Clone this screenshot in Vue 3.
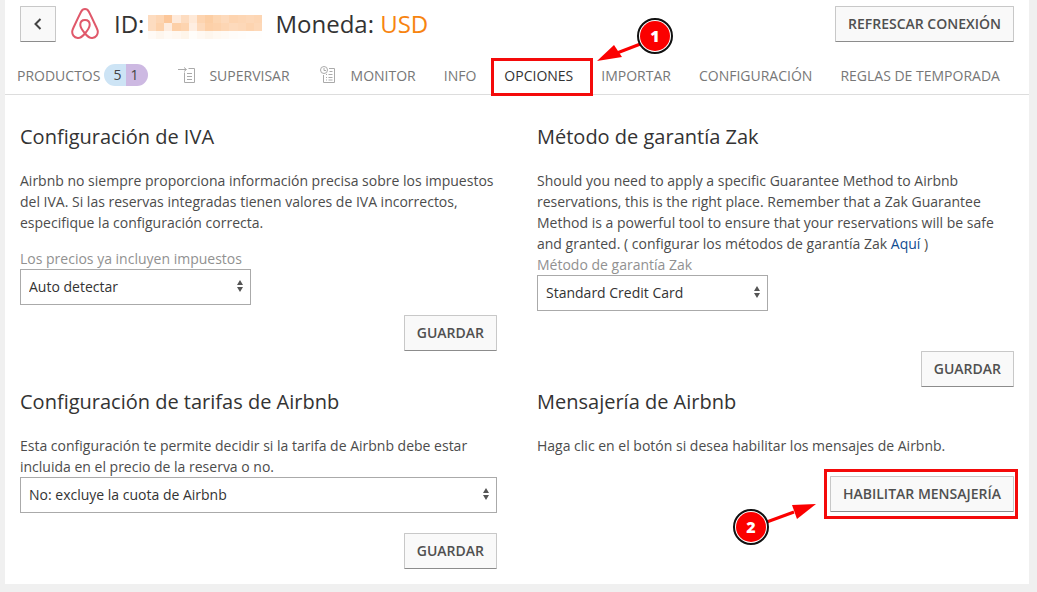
<script setup>
import { ref } from 'vue'

const vat = ref('Auto detectar')
const guarantee = ref('Standard Credit Card')
const fee = ref('No: excluye la cuota de Airbnb')

const mosaic = [
  ['#fddcc0', '#fdd6b4', '#fcc79a', '#feeadb', '#fddcc0', '#fee9d8', '#fdd4b0', '#fcceA4', '#fdd6b2', '#fddabc', '#fdd4b0', '#fdd6b4', '#fdd8b8', '#fdd6b4'],
  ['#fddcc0', '#fdd2ac', '#feecdf', '#fdd0a8', '#fdd4b0', '#feeee2', '#fddabc', '#fdd0a8', '#fdd2ac', '#fdd6b4', '#fddabc', '#fdd8b8', '#fdd4b0', '#fdd8b8'],
  ['#fffaf6', '#fef6ee', '#fffaf5', '#fff8f1', '#fef5ea', '#fffdfa', '#fff9f3', '#fef6ed', '#fff9f2', '#fffaf5', '#fffcf9', '#fffdfb', '#fffefd', '#fffefd'],
]
</script>

<template>
  <main class="card">
    <header class="top">
      <button class="btn back" type="button" aria-label="Volver">
        <svg width="10" height="14" viewBox="0 0 10 14" aria-hidden="true"><path d="M7.5 2 2.5 7l5 5" /></svg>
      </button>
      <svg class="logo" width="28" height="32" viewBox="0 0 28 32" aria-hidden="true">
        <path d="M14 25.5C10.8 21.6 9.3 18.8 9.3 16.7C9.3 13.9 11.2 12.1 14 12.1S18.7 13.9 18.7 16.7C18.7 18.8 17.2 21.6 14 25.5C11.3 28.8 8.9 30.2 6.7 30C3 29.7.7 26.5 1.3 22.8C1.5 21.7 2 20.7 3 18.5C5 14.2 8.5 6.7 10.1 3.7C11.1 1.8 12.2 1 14 1S16.9 1.8 17.9 3.7C19.5 6.7 23 14.2 25 18.5C26 20.7 26.5 21.7 26.7 22.8C27.3 26.5 25 29.7 21.3 30C19.1 30.2 16.7 28.8 14 25.5Z" />
      </svg>
      <h1>
        <span>ID:</span>
        <svg class="mosaic" width="114" height="24" viewBox="0 0 14 3" preserveAspectRatio="none" shape-rendering="crispEdges" aria-hidden="true">
          <template v-for="(row, y) in mosaic" :key="y">
            <rect v-for="(c, x) in row" :key="x" :x="x" :y="y" width="1" height="1" :fill="c" />
          </template>
        </svg>
        <span>Moneda: <span class="currency">USD</span></span>
      </h1>
      <button class="btn" type="button">REFRESCAR CONEXIÓN</button>
    </header>

    <nav>
      <a href="#">PRODUCTOS <span class="badge"><span>5</span><span>1</span></span></a>
      <a href="#">
        <svg class="nav-icon" width="18" height="18" viewBox="0 0 18 18" aria-hidden="true">
          <path d="M0 3.500h8M6 1.500l2.500 2L6 5.500M10.500 2.500h6v14h-10V6.500M9 7.500h5M9 10.500h5M9 13.500h5" />
        </svg>
        SUPERVISAR
      </a>
      <a href="#">
        <svg class="nav-icon" width="18" height="18" viewBox="0 0 18 18" aria-hidden="true">
          <circle cx="4" cy="4" r="3.500" />
          <path d="M4 2v2.500h2M9 2.500h5.500v14h-11V9M9.500 5.500h3M6 8.500h1M8.500 8.500h4M6 11.500h1M8.500 11.500h4M6 14h1M8.500 14h4" />
        </svg>
        MONITOR
      </a>
      <a href="#">INFO</a>
      <a href="#" class="active" aria-current="page">
        OPCIONES
        <span class="frame frame-tab"></span>
        <svg class="callout callout-tab" width="84" height="50" viewBox="0 0 84 50" aria-hidden="true">
          <path class="shaft" d="M50 27 24 37" />
          <path class="head" d="M4 45 21 29 29 41Z" />
          <circle class="rim" cx="62" cy="20" r="17" />
          <circle class="disc" cx="62" cy="20" r="15" />
          <text x="62" y="26">1</text>
        </svg>
      </a>
      <a href="#">IMPORTAR</a>
      <a href="#">CONFIGURACIÓN</a>
      <a href="#">REGLAS DE TEMPORADA</a>
    </nav>

    <div class="grid">
      <section>
        <h2>Configuración de IVA</h2>
        <p>Airbnb no siempre proporciona información precisa sobre los impuestos del IVA. Si las reservas integradas tienen valores de IVA incorrectos, especifique la configuración correcta.</p>
        <label class="spaced" for="vat">Los precios ya incluyen impuestos</label>
        <div class="select short">
          <select id="vat" v-model="vat"><option>Auto detectar</option></select>
          <svg width="6" height="12" viewBox="0 0 6 12" aria-hidden="true"><path d="M3 0 6 5H0ZM3 12 0 7h6Z" /></svg>
        </div>
        <div class="actions near"><button class="btn" type="button">GUARDAR</button></div>
      </section>

      <section>
        <h2>Método de garantía Zak</h2>
        <p>Should you need to apply a specific Guarantee Method to Airbnb reservations, this is the right place. Remember that a Zak Guarantee Method is a powerful tool to ensure that your reservations will be safe and granted. ( configurar los métodos de garantía Zak <a href="#">Aquí</a> )</p>
        <label for="guarantee">Método de garantía Zak</label>
        <div class="select short">
          <select id="guarantee" v-model="guarantee"><option>Standard Credit Card</option></select>
          <svg width="6" height="12" viewBox="0 0 6 12" aria-hidden="true"><path d="M3 0 6 5H0ZM3 12 0 7h6Z" /></svg>
        </div>
        <div class="actions far"><button class="btn" type="button">GUARDAR</button></div>
      </section>

      <section>
        <h2>Configuración de tarifas de Airbnb</h2>
        <p><label class="plain" for="fee">Esta configuración te permite decidir si la tarifa de Airbnb debe estar incluida en el precio de la reserva o no.</label></p>
        <div class="select">
          <select id="fee" v-model="fee"><option>No: excluye la cuota de Airbnb</option></select>
          <svg width="6" height="12" viewBox="0 0 6 12" aria-hidden="true"><path d="M3 0 6 5H0ZM3 12 0 7h6Z" /></svg>
        </div>
        <div class="actions"><button class="btn" type="button">GUARDAR</button></div>
      </section>

      <section>
        <h2>Mensajería de Airbnb</h2>
        <p>Haga clic en el botón si desea habilitar los mensajes de Airbnb.</p>
        <div class="actions">
          <div class="marked">
            <button class="btn" type="button">HABILITAR MENSAJERÍA</button>
            <span class="frame frame-button"></span>
            <svg class="callout callout-button" width="88" height="46" viewBox="0 0 88 46" aria-hidden="true">
              <path class="shaft" d="M32 22 62 11" />
              <path class="head" d="M84 3 60 4 65 18Z" />
              <circle class="rim" cx="19" cy="26" r="17" />
              <circle class="disc" cx="19" cy="26" r="15" />
              <text x="19" y="32">2</text>
            </svg>
          </div>
        </div>
      </section>
    </div>
  </main>
</template>

<style>
html {
  min-height: 100%;
  background: #f0f0f0;
}
</style>

<style scoped>
* {
  box-sizing: border-box;
}
.card {
  margin: 0 8px 8px 5px;
  background: #fff;
  color: #4c4c4c;
  font: 14px/21px "Open Sans", "Noto Sans", sans-serif;
}
.top {
  display: flex;
  align-items: center;
  padding: 6px 15px 0;
}
.btn {
  height: 36px;
  padding: 0 12px;
  border: 1px solid #c8c8c8;
  border-bottom-color: #8c8c8c;
  border-radius: 1px;
  background: #f9f9f9;
  color: #505050;
  font: 600 14px/20px "Open Sans", "Noto Sans", sans-serif;
  white-space: nowrap;
}
.back {
  display: grid;
  place-items: center;
  width: 36px;
  padding: 0;
}
.back svg {
  fill: none;
  stroke: #444;
  stroke-width: 2;
}
.logo {
  margin-left: 15px;
  fill: none;
  stroke: #e0586a;
  stroke-width: 2;
}
h1 {
  display: flex;
  align-items: center;
  flex: 1;
  margin: 0 0 0 15px;
  color: #333;
  font-size: 24px;
  font-weight: 400;
  line-height: 36px;
}
.mosaic {
  margin: 6px 13px 0 4px;
}
.currency {
  color: #f78410;
}
nav {
  display: flex;
  gap: 28px;
  height: 53px;
  padding: 15px 12px 0;
  border-bottom: 1px solid #ddd;
}
nav a {
  position: relative;
  display: flex;
  align-items: center;
  height: 36px;
  color: #777;
  text-decoration: none;
  white-space: nowrap;
}
nav .active {
  color: #333;
}
.badge {
  display: flex;
  margin-left: 4px;
  border-radius: 11px;
  overflow: hidden;
  color: #444;
  line-height: 22px;
}
.badge span {
  width: 22px;
  padding-left: 9px;
  background: #cde4f5;
}
.badge span + span {
  padding-left: 4px;
  background: #cdb9e2;
}
.nav-icon {
  margin: 0 13px 0 2px;
  fill: none;
  stroke: #aaa;
  stroke-width: 1;
}
.grid {
  display: grid;
  grid-template-columns: 1fr 1fr;
  column-gap: 40px;
  padding: 27px 15px 15px;
}
h2 {
  margin: 0 0 18px;
  color: #333;
  font-size: 20px;
  font-weight: 400;
  line-height: 30px;
}
p {
  margin: 0;
}
p a {
  color: #0f4c91;
  text-decoration: none;
}
label {
  display: block;
  color: #919191;
}
.plain {
  color: inherit;
}
.spaced {
  margin-top: 15px;
}
.select {
  position: relative;
}
.short {
  width: 231px;
}
select {
  display: block;
  width: 100%;
  height: 36px;
  padding: 0 24px 2px 8px;
  border: 1px solid #aaa;
  border-radius: 0;
  appearance: none;
  background: #fff;
  color: #333;
  font: inherit;
}
.select svg {
  position: absolute;
  top: 11px;
  right: 8px;
  fill: #555;
  pointer-events: none;
}
.actions {
  display: flex;
  justify-content: flex-end;
  margin-top: 20px;
}
.near {
  margin-top: 10px;
}
.far {
  margin-top: 40px;
}
.marked {
  position: relative;
}
.frame {
  position: absolute;
  border: 3px solid #f40a0a;
  pointer-events: none;
}
.frame-tab {
  inset: 1px -20px -3px -13px;
}
.frame-button {
  inset: -7px -4px -7px -6px;
}
.callout {
  position: absolute;
  z-index: 1;
  pointer-events: none;
}
.callout-tab {
  top: -41px;
  left: 89px;
}
.callout-button {
  top: 25px;
  right: 194px;
}
.shaft {
  stroke: #fb0000;
  stroke-width: 3;
}
.head {
  fill: #fb0000;
}
.rim {
  fill: #fff;
  stroke: #111;
  stroke-width: 2;
}
.disc {
  fill: #fb0000;
}
.callout text {
  fill: #fff;
  font: 800 16px "Open Sans", "Noto Sans", sans-serif;
  text-anchor: middle;
}
</style>
